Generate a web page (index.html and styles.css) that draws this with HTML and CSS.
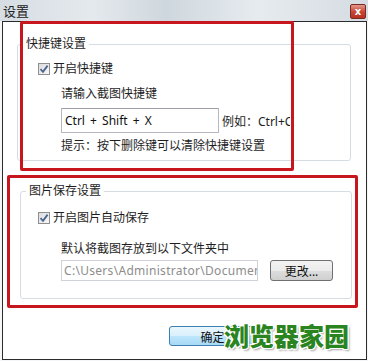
FILE: index.html
```html
<!DOCTYPE html>
<html lang="zh-CN">
<head>
    <meta charset="UTF-8">
    <meta name="viewport" content="width=device-width, initial-scale=1.0">
    <title>设置</title>
    <link rel="stylesheet" href="styles.css">
</head>
<body>

    <div class="window">
        <div class="titlebar">
            <span class="title">设置</span>
            <span class="close-btn">x</span>
        </div>

        <div class="client">
            <fieldset class="group group-hotkey">
                <legend>快捷键设置</legend>
                <div class="check-row">
                    <span class="checkbox">
                        <svg width="10" height="10" viewBox="0 0 10 10"><path d="M1.5 5.2 L4 7.8 L8.6 1.6" fill="none" stroke="#4b6492" stroke-width="1.8"/></svg>
                    </span>
                    开启快捷键
                </div>
                <div class="sub">
                    <div class="text-row">请输入截图快捷键</div>
                    <div class="input-row">
                        <div class="textbox hotkey-box">Ctrl + Shift + X</div>
                        <span class="example">例如：Ctrl+C</span>
                    </div>
                    <div class="text-row hint">提示：按下删除键可以清除快捷键设置</div>
                </div>
            </fieldset>

            <fieldset class="group group-save">
                <legend>图片保存设置</legend>
                <div class="check-row">
                    <span class="checkbox">
                        <svg width="10" height="10" viewBox="0 0 10 10"><path d="M1.5 5.2 L4 7.8 L8.6 1.6" fill="none" stroke="#4b6492" stroke-width="1.8"/></svg>
                    </span>
                    开启图片自动保存
                </div>
                <div class="sub">
                    <div class="text-row folder-label">默认将截图存放到以下文件夹中</div>
                    <div class="input-row">
                        <div class="textbox path-box">C:\Users\Administrator\Documents\</div>
                        <button class="change-btn">更改...</button>
                    </div>
                </div>
            </fieldset>

            <div class="footer">
                <button class="ok-btn">确定</button>
            </div>
        </div>

        <!-- annotation frames drawn over the dialog -->
        <div class="mark mark-hotkey"></div>
        <div class="mark mark-save"></div>
        <div class="watermark">浏览器家园</div>
    </div>

</body>
</html>
```

FILE: styles.css
```css
body {
    margin: 0;
    padding: 0;
    background: #ffffff;
    font-family: "Noto Sans", "Noto Sans CJK SC", sans-serif;
    font-size: 12px;
    color: #1e1e1e;
}
.window {
    position: relative;
    width: 368px;
    height: 361px;
    overflow: hidden;
    background: #f4f6f8;
}
.titlebar {
    height: 21px;
    display: flex;
    align-items: center;
    justify-content: space-between;
    padding: 0 2px 0 3px;
    background: linear-gradient(90deg, #d6dde3 0%, #e4e9ed 25%, #cfd7de 45%, #e6ebef 70%, #d5dce2 100%);
}
.title {
    font-size: 13px;
    color: #222;
    line-height: 16px;
}
.close-btn {
    width: 16px;
    height: 15px;
    margin-top: 1px;
    border: 1px solid #7a2a22;
    border-radius: 2px;
    background: linear-gradient(#e39a8c, #c9483a 50%, #b6301f);
    color: #fff;
    font-family: "DejaVu Sans", sans-serif;
    font-weight: bold;
    font-size: 10px;
    line-height: 14px;
    text-align: center;
    box-sizing: border-box;
}
.client {
    margin-left: 2px;
    width: 365px;
    height: 339px;
    box-sizing: border-box;
    border: 1px solid #2b2b2b;
    background: #ffffff;
    overflow: hidden;
}
.group {
    margin: 0;
    padding: 0;
    border: 1px solid #d5dde3;
    border-radius: 3px;
    box-sizing: border-box;
}
.group legend {
    margin-left: 5px;
    padding: 0 3px;
    line-height: 16px;
    font-size: 12px;
    color: #1e1e1e;
}
.group-hotkey {
    margin: 14px 0 0 14px;
    width: 334px;
    height: 125px;
}
.group-save {
    margin: 22px 0 0 17px;
    width: 332px;
    height: 116px;
}
.check-row {
    display: flex;
    align-items: center;
    height: 16px;
    line-height: 16px;
}
.group-hotkey .check-row {
    margin-top: 9px;
    padding-left: 20px;
}
.group-save .check-row {
    margin-top: 11px;
    padding-left: 17px;
}
.checkbox {
    width: 12px;
    height: 12px;
    margin-right: 3px;
    box-sizing: border-box;
    border: 1px solid #8f8f8f;
    background: linear-gradient(135deg, #dcdcdc, #f8f8f8);
    display: flex;
    align-items: center;
    justify-content: center;
}
.sub {
    display: flex;
    flex-direction: column;
}
.group-hotkey .sub {
    padding-left: 43px;
}
.group-save .sub {
    padding-left: 40px;
}
.text-row {
    height: 16px;
    line-height: 16px;
    margin-top: 9px;
}
.hint {
    margin-top: 5px;
}
.folder-label {
    margin-top: 15px;
}
.input-row {
    display: flex;
    align-items: center;
    margin-top: 6px;
}
.textbox {
    box-sizing: border-box;
    border: 1px solid #b5b9bf;
    border-top-color: #9da1a7;
    background: #fff;
    padding-left: 3px;
    white-space: nowrap;
    overflow: hidden;
}
.hotkey-box {
    width: 158px;
    height: 25px;
    line-height: 23px;
    font-size: 12px;
    word-spacing: 2px;
    color: #111;
}
.example {
    margin-left: 3px;
    width: 68px;
    overflow: hidden;
    white-space: nowrap;
    color: #1e1e1e;
}
.group-save .input-row {
    margin-top: 3px;
}
.path-box {
    width: 197px;
    height: 21px;
    line-height: 19px;
    font-size: 12px;
    letter-spacing: 0.3px;
    color: #8d8d8d;
    border-color: #cfd2d6;
    padding-left: 2px;
}
.change-btn {
    margin-left: 12px;
    width: 63px;
    height: 21px;
    padding: 0;
    border: 1px solid #707070;
    border-radius: 3px;
    background: linear-gradient(#f3f3f3, #ebebeb 50%, #dddddd 51%, #cfcfcf);
    font-family: "Noto Sans", "Noto Sans CJK SC", sans-serif;
    font-size: 12px;
    color: #111;
}
.footer {
    display: flex;
    padding-left: 166px;
    margin-top: 27px;
}
.ok-btn {
    width: 95px;
    height: 20px;
    padding: 0 8px 0 0;
    border: 1px solid #3c7fb1;
    border-radius: 3px;
    background: linear-gradient(#eaf6fd, #d9f0fc 50%, #bee6fd 51%, #a7d9f5);
    font-family: "Noto Sans CJK SC", sans-serif;
    font-size: 12px;
    color: #111;
}
.mark {
    position: absolute;
    border: 3px solid #c8161e;
    border-radius: 2px;
    box-sizing: border-box;
}
.mark-hotkey {
    left: 20px;
    top: 21px;
    width: 274px;
    height: 150px;
}
.mark-save {
    left: 7px;
    top: 175px;
    width: 351px;
    height: 133px;
}
.watermark {
    position: absolute;
    left: 224px;
    top: 320px;
    font-family: "Noto Sans CJK SC", sans-serif;
    font-weight: 900;
    font-size: 25px;
    line-height: 30px;
    color: #2a8420;
    text-shadow:
        1px 0 0 #fff, -1px 0 0 #fff, 0 1px 0 #fff, 0 -1px 0 #fff,
        1px 1px 0 #fff, -1px -1px 0 #fff, 1px -1px 0 #fff, -1px 1px 0 #fff,
        2px 2px 2px rgba(0,0,0,0.35);
}
```
